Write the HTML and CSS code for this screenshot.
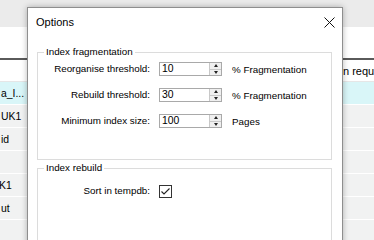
FILE: index.html
```html
<!DOCTYPE html>
<html>
<head>
<meta charset="utf-8">
<link rel="stylesheet" href="styles.css">
</head>
<body>
<div class="screen">
  <div class="app">
    <div class="toolbar"></div>
    <div class="grid">
      <div class="grid-top"></div>
      <div class="row head"><span class="c1"></span><span class="c2">n required</span></div>
      <div class="row sel"><span class="c1">a_I...</span><span class="c2"></span></div>
      <div class="row"><span class="c1">UK1</span><span class="c2"></span></div>
      <div class="row"><span class="c1">id</span><span class="c2"></span></div>
      <div class="row"><span class="c1"></span><span class="c2"></span></div>
      <div class="row"><span class="c1 cut">K1</span><span class="c2"></span></div>
      <div class="row"><span class="c1">ut</span><span class="c2"></span></div>
      <div class="row"><span class="c1"></span><span class="c2"></span></div>
      <div class="row"><span class="c1"></span><span class="c2"></span></div>
    </div>
  </div>

  <div class="dialog">
    <div class="titlebar">
      <span class="title">Options</span>
      <span class="close">
        <svg width="11" height="11" viewBox="0 0 11 11"><path d="M0.5 0.5L10.5 10.5M10.5 0.5L0.5 10.5" stroke="#111" stroke-width="1" fill="none"/></svg>
      </span>
    </div>
    <div class="content">
      <fieldset class="group g1">
        <legend>Index fragmentation</legend>
        <div class="form">
          <label>Reorganise threshold:</label>
          <div class="spin"><span class="val">10</span><span class="btns"><span class="up"></span><span class="down"></span></span></div>
          <span class="unit">% Fragmentation</span>

          <label>Rebuild threshold:</label>
          <div class="spin"><span class="val">30</span><span class="btns"><span class="up"></span><span class="down"></span></span></div>
          <span class="unit">% Fragmentation</span>

          <label>Minimum index size:</label>
          <div class="spin"><span class="val">100</span><span class="btns"><span class="up"></span><span class="down"></span></span></div>
          <span class="unit">Pages</span>
        </div>
      </fieldset>
      <fieldset class="group g2">
        <legend>Index rebuild</legend>
        <div class="form">
          <label>Sort in tempdb:</label>
          <span class="check">
            <svg width="13" height="13" viewBox="0 0 13 13"><rect x="0.5" y="0.5" width="12" height="12" fill="#fff" stroke="#333"/><path d="M2.5 6.5L5 9L10.5 3.5" stroke="#222" stroke-width="1.1" fill="none"/></svg>
          </span>
          <span></span>
        </div>
      </fieldset>
    </div>
  </div>
</div>
</body>
</html>
```
FILE: styles.css
```css
* { box-sizing: border-box; }
html, body { margin: 0; padding: 0; }
body {
  background: #f1f2f2;
  font-family: "Liberation Sans", Arial, sans-serif;
  font-size: 9.8px;
  color: #000;
}
.screen {
  position: relative;
  width: 374px;
  height: 100vh;
  min-height: 213px;
  overflow: hidden;
  background: #f1f2f2;
}
.app { display: flex; flex-direction: column; height: 100%; }
.toolbar { height: 27px; background: #ebebeb; flex: none; }
.grid { background: #f1f2f2; flex: 1; font-size: 10.4px; overflow: hidden; }
.grid-top { height: 33px; background: #fff; border-bottom: 2px solid #5a5a5a; }
.row {
  display: grid;
  grid-template-columns: 342px 1fr;
  height: 23px;
  align-items: center;
  background: #f1f2f2;
  border-bottom: 1px solid #fff;
}
.row.head { background: #fff; height: 22px; border-bottom: 1px solid #e6e6e6; font-size: 11px; }
.row.sel { background: #d9f6f8; }
.c1 { padding-left: 1px; white-space: nowrap; overflow: hidden; }
.c1.cut { margin-left: -2px; }
.c2 { white-space: nowrap; overflow: hidden; padding-left: 1px; }

.dialog {
  position: absolute;
  left: 27px;
  top: 7px;
  width: 316px;
  bottom: -20px;
  background: #fff;
  border: 1px solid #8e8e8e;
  box-shadow: 0 0 6px rgba(0,0,0,0.28);
}
.titlebar {
  height: 28px;
  display: flex;
  align-items: center;
  justify-content: space-between;
  padding-left: 8px;
}
.title { font-size: 11px; }
.close {
  width: 26px;
  height: 28px;
  display: flex;
  align-items: center;
  justify-content: center;
}
.close svg { display: block; }
.content { padding: 10px 10px 0 9px; }
.group {
  margin: 0;
  border: 1px solid #dcdcdc;
  padding: 4px 0 31px 0;
  min-width: 0;
}
.group legend {
  margin-left: 6px;
  padding: 0 2px;
  line-height: 12px;
  font-size: 9.8px;
}
.g2 { margin-top: 2px; padding-top: 10px; padding-bottom: 60px; }
.form {
  display: grid;
  grid-template-columns: 112px 63px auto;
  column-gap: 9px;
  row-gap: 12px;
  align-items: center;
}
.form label { text-align: right; white-space: nowrap; line-height: 14px; }
.unit { margin-left: 1px; white-space: nowrap; }
.spin {
  height: 14px;
  border: 1px solid #a9a9a9;
  display: flex;
  align-items: stretch;
  justify-content: space-between;
  background: #fff;
}
.val { padding-left: 2px; line-height: 12px; font-size: 10.4px; }
.btns {
  width: 12px;
  display: flex;
  flex-direction: column;
}
.up, .down {
  flex: 1;
  background: #efefef;
  border-left: 1px solid #c8c8c8;
  display: flex;
  align-items: center;
  justify-content: center;
}
.up { border-bottom: 1px solid #c8c8c8; }
.up::after {
  content: "";
  border-left: 2.5px solid transparent;
  border-right: 2.5px solid transparent;
  border-bottom: 3px solid #222;
}
.down::after {
  content: "";
  border-left: 2.5px solid transparent;
  border-right: 2.5px solid transparent;
  border-top: 3px solid #222;
}
.check { display: flex; height: 13px; }
.check svg { display: block; }
```
